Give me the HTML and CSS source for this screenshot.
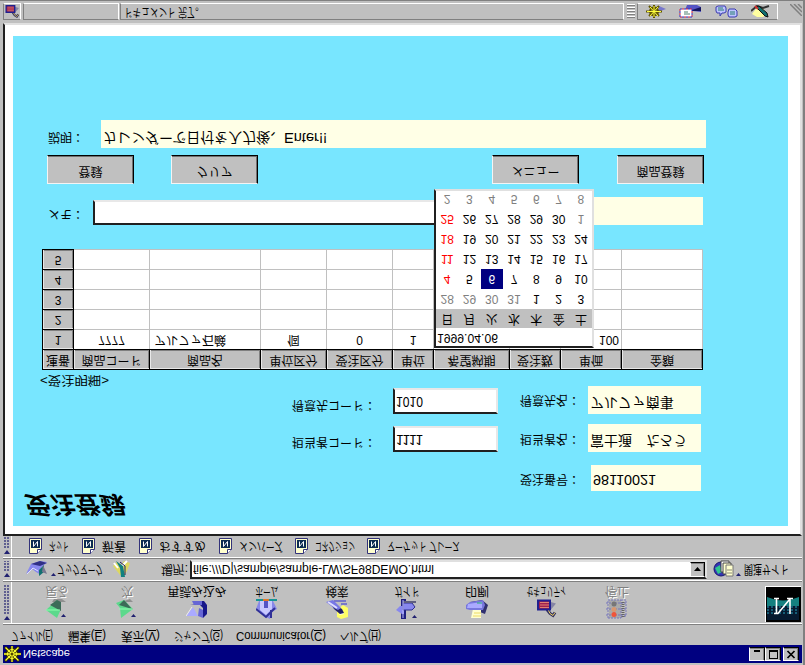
FILE: index.html
```html
<!DOCTYPE html>
<html lang="ja">
<head>
<meta charset="utf-8">
<title>Netscape</title>
<link rel="stylesheet" href="styles.css">
</head>
<body>
<svg class="defs" width="0" height="0">
  <symbol id="page" viewBox="0 0 13 16">
    <path d="M.5.5h8l4 4v11H.5z" fill="#ffffce" stroke="#33337a"/>
    <path d="M8.5.5v4h4" fill="#fff" stroke="#33337a"/>
    <path d="M2 6h9v8H2z" fill="#0c2c50"/>
    <path d="M4.500 12.500v-5l4 5v-5" fill="none" stroke="#fff"/>
  </symbol>
  <symbol id="wheel" viewBox="0 0 17 16">
    <path d="M8 0v16M0 8h17M1 1l14 14M15 1L1 15" stroke="#302c00" stroke-width="3"/>
    <circle cx="8" cy="8" r="5" fill="none" stroke="#302c00" stroke-width="3"/>
    <path d="M8 0v16M0 8h17M1.500 1.500l13 13M14.500 1.500l-13 13" stroke="#ffff30" stroke-width="1.300"/>
    <circle cx="8" cy="8" r="4.500" fill="none" stroke="#ffff30"/>
    <circle cx="8" cy="8" r="1.500" fill="#504800"/>
  </symbol>
  <symbol id="lock" viewBox="0 0 20 18">
    <path d="M12 16l7-2-5-6h-2z" fill="#8585a5"/>
    <path d="M10 8l3-4 3-2 2 3" fill="none" stroke="#303060" stroke-width="3"/>
    <path d="M11 8l2-4 3-2 2 3" fill="none" stroke="#eed060"/>
    <path d="M1 8h12v9H1z" fill="#a02050" stroke="#202090" stroke-width="2"/>
    <path d="M3 10h9M3 12.500h9M3 15h9" stroke="#e08070"/>
  </symbol>
</svg>

<div class="screen">
<header class="titlebar">
  <svg class="wheel" width="17" height="16"><use href="#wheel"/></svg>
  <span class="grow"><span data-w="47">Netscape</span></span>
  <span class="wbtn"><svg width="12" height="11"><path d="M3 8h6v2H3z"/></svg></span>
  <span class="wbtn"><svg width="12" height="11"><path d="M2 1h9v9H2zM3 2v6h7V2z" fill-rule="evenodd"/></svg></span>
  <span class="wbtn close"><svg width="12" height="11"><path d="M2.500 2l7 7M9.500 2l-7 7" stroke="#000" stroke-width="1.700"/></svg></span>
</header>
<nav class="menubar">
  <span class="m1"><span data-w="42">ファイル(<u>F</u>)</span></span>
  <span class="m2"><span data-w="38">編集(<u>E</u>)</span></span>
  <span class="m3"><span data-w="39">表示(<u>V</u>)</span></span>
  <span class="m4"><span data-w="49">ジャンプ(<u>G</u>)</span></span>
  <span class="m5"><span data-w="90">Communicator(<u>C</u>)</span></span>
  <span class="m6"><span data-w="41">ヘルプ(<u>H</u>)</span></span>
</nav>

<section class="bar navbar">
  <i class="grip"><b></b></i>
  <div class="tools">
    <div class="tool off">
      <svg width="22" height="21"><path d="M6 17h14l-4 3H8z" fill="#909090"/><path d="M0 9L11 1l4 9-4 9z" fill="#5cd98c"/><path d="M4 14l11-6v9l-4 2z" fill="#3b6b58"/><path d="M0 9h14" stroke="#8fffb0"/><path d="M15 2h5l-2.500 3z" fill="#202070"/></svg>
      <span data-w="23">戻る</span></div>
    <div class="tool off">
      <svg width="22" height="21"><path d="M5 17h12l-3 3z" fill="#909090"/><path d="M5 1l12 9-9 9-8-3 4-5z" fill="#5cd98c"/><path d="M3 14l13-4-8 9z" fill="#3b6b58"/><path d="M3 10h13" stroke="#8fffb0"/><path d="M15 2h5l-2.500 3z" fill="#202070"/></svg>
      <span data-w="12">次</span></div>
    <div class="tool">
      <svg width="22" height="21"><path d="M4 15h4l2 3h8l3-4v-9l-4-4v10l-3 3z" fill="#18188a"/><path d="M0 3h12l-5 9z" fill="#aaaaff"/><path d="M8 14h8v4H6z" fill="#6666d5"/><path d="M12 3l5-2v8l-4 2z" fill="#6666d5"/><path d="M0 3L6 12" stroke="#eee"/></svg>
      <span data-w="59">再読み込み</span></div>
    <div class="tool">
      <svg width="22" height="21"><path d="M0 10L10 2l4-2v6l7 4-4 8H3z" fill="#8888e8"/><path d="M4 9l6-5 6 6v9H4z" fill="#c9c9ff"/><path d="M0 10L10 2l9 9M15 1v8" fill="none" stroke="#303098" stroke-width="2"/><path d="M8 11h4v8H8z" fill="#5555c5"/><path d="M0 19h21" stroke="#159595" stroke-width="2"/><path d="M7 19h6" stroke="#e07828" stroke-width="2"/></svg>
      <span data-w="23">ホーム</span></div>
    <div class="tool">
      <svg width="22" height="21"><path d="M11 2l4-2 7 2v9l-5 3-6-5z" fill="#ffff65"/><path d="M13 4l5 1-2 3z" fill="#fff"/><path d="M3 18l13-8 2-4-4-1-6 5z" fill="#202068"/><path d="M0 17l8-6 4-2 3 2-8 8z" fill="#7777e5"/><path d="M2 17l9-6" stroke="#ddddff" stroke-width="2"/><path d="M8 18h12M15 15h6" stroke="#7777c9" stroke-width="2"/></svg>
      <span data-w="23">検索</span></div>
    <div class="tool">
      <svg width="22" height="21"><path d="M5 0h5v20H5z" fill="#202080"/><path d="M0 9l6-4h2v8H4z" fill="#8888ee"/><path d="M7 9h9l3 3-3 4H7z" fill="#8888ee" stroke="#303090"/><path d="M7 17h13" stroke="#606080" stroke-width="2"/><path d="M7 1v18" stroke="#bbbbff"/><path d="M16 1h5l-2.500 3z" fill="#202070"/></svg>
      <span data-w="25">ガイド</span></div>
    <div class="tool">
      <svg width="22" height="21"><path d="M4 17l12 2 6-5-3-9-10 4z" fill="#303070"/><path d="M5 1h10v9H7z" fill="#ffffd0"/><path d="M7 3h8M8 6h7" stroke="#eedb65"/><path d="M0 10l4-1h13l2 5-2 5-13-2-4-3z" fill="#7777dd"/><path d="M1 11h15v6L2 15z" fill="#aaaaff"/><path d="M11 16h5" stroke="#20b070"/></svg>
      <span data-w="24">印刷</span></div>
    <div class="tool">
      <svg width="20" height="18"><use href="#lock"/></svg>
      <span data-w="40">セキュリティ</span></div>
    <div class="tool off">
      <svg width="22" height="21"><path d="M3 1h12v18H3z" fill="#aaa"/><path d="M2 1h13v18H2zM15 2l5 1v16h-5M0 4h20M0 10h20M0 16h20" fill="none" stroke="#7777bb" stroke-dasharray="2 1"/><circle cx="8" cy="15" r="2.500" fill="#777"/><circle cx="8" cy="9.500" r="2.500" fill="#d99870"/><circle cx="8" cy="4.500" r="2.500" fill="#f0553a"/><path d="M17 2v16" stroke="#666" stroke-dasharray="1 1" stroke-width="3"/></svg>
      <span data-w="24">停止</span></div>
  </div>
  <svg class="logo" width="36" height="36">
    <path d="M0 0h36v36H0z" fill="#000"/><path d="M2 2h32v32H2z" fill="#061a30"/>
    <path d="M2 16h32v9H2z" fill="#148080"/><path d="M2 9h32M2 12h32M2 15h32" stroke="#155d76" stroke-dasharray="2 2" stroke-width="2"/>
    <path d="M2 25q16-7 32 0v9H2z" fill="#000"/>
    <path d="M9 23.500h5M11.500 23V8M9 8.500h4l11.500 14M25 23V8M22 23.500h6" fill="none" stroke="#fff" stroke-width="1.600"/>
    <path d="M0 35.500h36M.5 0v36" stroke="#fff"/>
  </svg>
</section>

<section class="bar locbar">
  <i class="grip"><b></b></i>
  <svg class="bm" width="30" height="18"><path d="M0 4l5 10 9 3 7-1-7-7 1-6-5 3-4 3z" fill="#8888ee"/><path d="M5 14l9 3 7-2-7-3z" fill="#303085"/><path d="M1 4l6 6 5-3" fill="none" stroke="#ddddff"/><path d="M13 2l5 4v7l-5-5z" fill="#107070"/><path d="M16 6l5-2-4 9" fill="#777790"/><path d="M25 2h5l-2.500 3z" fill="#202070"/></svg>
  <span data-w="46">ブックマーク</span>
  <svg class="loc" width="18" height="18"><path d="M0 12l4 4 4-3 3 4 6-2-3-8-3-5-4 1z" fill="#ddd860"/><path d="M5 10L1 15M9 12l5 5" stroke="#fff" stroke-width="2"/><path d="M8 1h4l-2 11-7 5 4-7z" fill="#108080"/><path d="M12 3v9l-5 4" fill="none" stroke="#202060"/></svg>
  <span data-w="27">場所:</span>
  <div class="url"><span class="grow"><span data-w="241">file:///D|/sample/sample-LW/SF98DEMO.html</span></span><span class="drop"><svg width="7" height="4"><path d="M0 0h7L3.500 4z"/></svg></span></div>
  <svg class="rel" width="28" height="18"><circle cx="8" cy="9" r="7" fill="#3535b5" stroke="#151570"/><path d="M2 10l3-6 4 2-2 7z" fill="#30c590"/><path d="M8 6h8v11H8z" fill="#fff" stroke="#444"/><path d="M10 4h8v11h-8z" fill="#ffffce" stroke="#444"/><path d="M13 2h7v11h-7z" fill="#ffffce" stroke="#777"/><path d="M14 5h5M14 8h5" stroke="#887"/><path d="M23 2h5l-2.500 3z" fill="#202070"/></svg>
  <span data-w="45">関連サイト</span>
</section>

<section class="bar personal">
  <i class="grip"><b></b></i>
  <a class="p1"><svg width="13" height="16"><use href="#page"/></svg><span data-w="20">ネット</span></a>
  <a class="p2"><svg width="13" height="16"><use href="#page"/></svg><span data-w="24">新着</span></a>
  <a class="p3"><svg width="13" height="16"><use href="#page"/></svg><span data-w="47">おすすめ</span></a>
  <a class="p4"><svg width="13" height="16"><use href="#page"/></svg><span data-w="44">メンバーズ</span></a>
  <a class="p5"><svg width="13" height="16"><use href="#page"/></svg><span data-w="40">コネクション</span></a>
  <a class="p6"><svg width="13" height="16"><use href="#page"/></svg><span data-w="73">マーケット プレース</span></a>
</section>

<main class="view">
<div class="form">
  <h1><span data-w="100">受注登録</span></h1>
  <div class="fields number">
    <label class="c3">受注番号：</label><output class="c4"><span data-w="63">98110021</span></output>
  </div>
  <div class="fields person">
    <label class="c1">担当者コード：</label><div class="inset c2"><span data-w="27">1111</span></div>
    <label class="c3">担当者名：</label><output class="c4">富士通　たろう</output>
  </div>
  <div class="fields client">
    <label class="c1">得意先コード：</label><div class="inset c2"><span data-w="27">1010</span></div>
    <label class="c3">得意先名：</label><output class="c4">アルファ商事</output>
  </div>
  <div class="caption"><span data-w="69">&lt;受注明細&gt;</span></div>
  <div class="order">
    <table>
      <colgroup><col class="w31"><col class="w76"><col class="w111"><col class="w66"><col class="w66"><col class="w41"><col class="w76"><col class="w51"><col class="w61"><col class="w81"></colgroup>
      <tr><th>連番</th><th>商品コード</th><th>商品名</th><th>単位区分</th><th>受注区分</th><th>単位</th><th>希望納期</th><th>受注数</th><th>単価</th><th>金額</th></tr>
      <tr><th>1</th><td>7777</td><td class="left">アルファ石鹸</td><td>個</td><td>0</td><td>1</td><td></td><td></td><td class="right">100</td><td></td></tr>
      <tr><th>2</th><td></td><td></td><td></td><td></td><td></td><td></td><td></td><td></td><td></td></tr>
      <tr><th>3</th><td></td><td></td><td></td><td></td><td></td><td></td><td></td><td></td><td></td></tr>
      <tr><th>4</th><td></td><td></td><td></td><td></td><td></td><td></td><td></td><td></td><td></td></tr>
      <tr><th>5</th><td></td><td></td><td></td><td></td><td></td><td></td><td></td><td></td><td></td></tr>
    </table>
    <div class="calendar">
      <div class="date"><span data-w="61">1999.04.06</span></div>
      <div class="week head"><span>日</span><span>月</span><span>火</span><span>水</span><span>木</span><span>金</span><span>土</span></div>
      <div class="week"><span class="dim">28</span><span class="dim">29</span><span class="dim">30</span><span class="dim">31</span><span>1</span><span>2</span><span>3</span></div>
      <div class="week"><span class="red">4</span><span>5</span><span class="sel">6</span><span>7</span><span>8</span><span>9</span><span>10</span></div>
      <div class="week"><span class="red">11</span><span>12</span><span>13</span><span>14</span><span>15</span><span>16</span><span>17</span></div>
      <div class="week"><span class="red">18</span><span>19</span><span>20</span><span>21</span><span>22</span><span>23</span><span>24</span></div>
      <div class="week"><span class="red">25</span><span>26</span><span>27</span><span>28</span><span>29</span><span>30</span><span class="dim">1</span></div>
      <div class="week"><span class="dim">2</span><span class="dim">3</span><span class="dim">4</span><span class="dim">5</span><span class="dim">6</span><span class="dim">7</span><span class="dim">8</span></div>
    </div>
  </div>
  <div class="memo"><label>メモ：</label><div class="inset"></div><output></output></div>
  <div class="buttons"><button>登録</button><button>クリア</button><button>メニュー</button><button>商品登録</button></div>
  <div class="desc"><label>説明：</label><output>カレンダーで日付を入力後、<span data-w="43">Enter!!</span></output></div>
</div>
</main>

<footer class="status">
  <div class="cell s1"><svg width="15" height="13" viewBox="0 0 20 18"><use href="#lock"/></svg></div>
  <div class="cell s2"></div>
  <div class="cell s3"><span data-w="80">ドキュメント 完了。</span></div>
  <i class="hgrip"></i>
  <div class="cell s4">
    <svg width="22" height="13" viewBox="0 0 22 13"><path d="M13 6l8 3-7 3z" fill="#7777cc"/><path d="M9 0v13M1 6.500h16M4 2l10 10M14 2L4 12" stroke="#605500" stroke-width="2"/><circle cx="9" cy="6.500" r="4" fill="none" stroke="#605500" stroke-width="2"/><path d="M9 1v11M2 6.500h14M5 2l8 9M13 2L5 11" stroke="#ffff40"/></svg>
    <svg width="24" height="13" viewBox="0 0 24 13"><path d="M6 8l16-2v5l-4 2H8z" fill="#5555c5"/><path d="M10 7h12v4z" fill="#151560"/><path d="M1 1h12v8H1z" fill="#fff" stroke="#d02040" stroke-dasharray="2 2"/><path d="M1 1h12v8H1z" fill="none" stroke="#3030c0" stroke-dasharray="2 2" stroke-dashoffset="2"/><path d="M5 4h6M5 6h4" stroke="#508070"/></svg>
    <svg width="24" height="13" viewBox="0 0 24 13"><path d="M3 12h7l1-2V6L9 5H7L5 2v3H2L1 7v4zM14 9h6l2-2V2l-2-1h-6l-1 2v3z" fill="#bfc4ff" stroke="#3a3ab0"/><path d="M3 8h6M3 10h5M15 4h5M15 6h5" stroke="#287f70"/></svg>
    <svg width="20" height="13" viewBox="0 0 20 13"><path d="M1 4l5-3h6l4 3-4 6-5 2z" fill="#ffffa0"/><path d="M0 7l6 5 6-2 6 2" fill="none" stroke="#333" stroke-width="2"/><path d="M5 11L14 2l3-1-1 4-8 7z" fill="#107070" stroke="#111"/><path d="M4 12l3-3" stroke="#d03030" stroke-width="2"/></svg>
  </div>
  <svg class="resize" width="12" height="12"><path d="M0 12L12 0M4 12l8-8M8 12l4-4" stroke="#808080" stroke-width="1.500"/></svg>
</footer>
</div>
<script src="fit.js"></script>
</body>
</html>
```
FILE: styles.css
```css
* { box-sizing: border-box; }
body { margin: 0; background: #c0c0c0; }
.defs { position: absolute; }
.screen {
  width: 805px; height: 665px; overflow: hidden;
  display: flex; flex-direction: column;
  padding: 2px 1px 0 3px; background: #c0c0c0;
  border-right: 2px solid #808080; border-bottom: 1px solid #808080;
  font: 12px/16px "Liberation Sans", "Noto Sans CJK JP", sans-serif;
  color: #000; white-space: nowrap;
  transform: scaleY(-1);
}
.screen svg { display: block; flex: none; }
[data-w] { display: inline-block; transform-origin: 0 50%; }
.grow { flex: 1; }

.titlebar { height: 18px; background: #000080; color: #fff; display: flex; align-items: center; font-size: 11px; padding-right: 3px; flex: none; }
.wheel { margin: 0 2px 0 1px; }
.wbtn { width: 16px; height: 14px; background: #c0c0c0; border: 1px solid; border-color: #fff #000 #000 #fff; box-shadow: inset -1px -1px #808080; }
.wbtn.close { margin-left: 2px; }
.wbtn svg { margin-left: 1px; }
.menubar { height: 20px; display: flex; align-items: center; padding: 0 0 2px 8px; flex: none; font-size: 12px; }
.m1 { width: 57px; } .m2 { width: 53px; } .m3 { width: 53px; } .m4 { width: 62px; } .m5 { width: 104px; }
.menubar u { text-underline-offset: 1px; }

.bar { display: flex; border-top: 1px solid #808080; box-shadow: inset 0 1px #fff; flex: none; padding-top: 1px; }
.grip { width: 9px; flex: none; border-right: 1px solid #fff; padding: 3px 1px 2px; display: flex; flex-direction: column; }
.grip::after { content: ""; flex: 1; background: radial-gradient(circle at 1px 1px, #606090 0.800px, transparent 1px) 0 0 / 3px 3px; }
.grip b { width: 0; height: 0; border: 3px solid transparent; border-top: 4px solid #202070; border-bottom: 0; margin-bottom: 2px; }

.navbar { height: 43px; }
.tools { display: flex; padding-left: 10px; flex: 1; }
.tool { width: 70px; display: flex; flex-direction: column; align-items: center; padding-top: 4px; }
.tool svg { height: 21px; }
.tool span { line-height: 15px; }
.off span { color: #808080; text-shadow: 1px -1px #fff; }
.logo { margin: 1px 1px 0 0; }

.locbar { height: 23px; align-items: center; }
.locbar .grip, .personal .grip { align-self: stretch; }
.bm { margin: 0 1px 0 14px; }
.loc { margin: 0 30px 0 10px; }
.url { width: 517px; height: 19px; margin-left: 2px; background: #fff; border: 2px solid; border-color: #202020 #e0e0e0 #e0e0e0 #202020; display: flex; align-items: center; padding-left: 1px; flex: none; }
.drop { width: 15px; height: 15px; background: #c0c0c0; border: 1px solid; border-color: #fff #000 #000 #fff; box-shadow: inset -1px -1px #808080; display: grid; place-items: center; }
.rel { margin: 0 3px 0 6px; }
.personal { height: 24px; align-items: center; }
.personal a { display: flex; align-items: center; gap: 7px; }
.p1 { width: 53px; margin-left: 17px; } .p2 { width: 57px; } .p3 { width: 80px; } .p4 { width: 76px; } .p5 { width: 72px; }

.view { flex: none; height: 513px; width: 799px; margin: -1px 0 0 0; padding: 8px 0 0 8px; background: #fff; border: 2px solid; border-color: #202020 #e0e0e0 #e0e0e0 #202020; }
.form { width: 775px; height: 490px; background: #78e6ff; display: flex; flex-direction: column; }
.form > * { flex: none; }
h1 { margin: 0; height: 35px; padding: 7px 0 0 10px; font: italic bold 24px/26px "Noto Sans CJK JP", sans-serif; }
output, .inset { display: block; font-size: 14px; }
output { background: #ffffe6; height: 28px; line-height: 22px; padding-left: 2px; }
.inset { background: #fff; border: 2px solid; border-color: #202020 #e8e8e8 #e8e8e8 #202020; }
.fields { display: grid; grid-template-columns: 101px 127px 68px 113px; padding-left: 279px; height: 28px; }
.c1 { grid-column: 1; } .c2 { grid-column: 2; width: 105px; height: 26px; padding-left: 1px; line-height: 21px; } .c3 { grid-column: 3; } .c4 { grid-column: 4; }
.number { height: 26px; }
.number .c3 { padding-top: 4px; }
.number output { height: 26px; margin-left: 3px; }
.person { margin-top: 13px; }
.person .c1 { padding-top: 2px; } .person .c3 { padding-top: 5px; }
.client { margin-top: 10px; }
.client .c1 { padding-top: 1px; } .client .c3 { padding-top: 6px; }
.caption { height: 16px; padding-left: 27px; line-height: 12px; }

.order { position: relative; height: 145px; padding-left: 29px; }
table { width: 660px; table-layout: fixed; border-collapse: collapse; }
.w31 { width: 31px; } .w76 { width: 76px; } .w111 { width: 111px; } .w66 { width: 66px; } .w41 { width: 41px; } .w51 { width: 51px; } .w61 { width: 61px; } .w81 { width: 81px; }
tr { height: 20px; }
td, th { height: 20px; padding: 0; text-align: center; line-height: 17px; border: 1px solid #c0c0c0; background: #fff; font-weight: normal; }
th { background: #c0c0c0; border-color: #000; box-shadow: inset 1px 1px #e8e8e8, inset -1px -1px #808080; }
.left { text-align: left; padding-left: 4px; }
.right { text-align: right; padding-right: 2px; }
.calendar { position: absolute; left: 421px; top: 22px; width: 160px; height: 159px; background: #fff; border: 2px solid; border-color: #202020 #e0e0e0 #e0e0e0 #202020; z-index: 2; }
.date { height: 18px; line-height: 17px; padding-left: 1px; font-size: 12px; }
.week { display: grid; grid-template-columns: repeat(7, 22.300px); height: 20px; line-height: 20px; text-align: center; font-size: 12px; }
.head { background: #c0c0c0; height: 19px; line-height: 19px; }
.dim { color: #808080; }
.red { color: #f00; }
.sel { background: #000080; color: #fff; }

.memo { display: flex; padding-left: 35px; height: 41px; }
.memo label { width: 45px; padding-top: 3px; }
.memo .inset { width: 345px; height: 25px; }
.memo output { width: 265px; }
.buttons { display: flex; padding-left: 34px; height: 36px; }
button { width: 87px; height: 29px; padding: 0 0 3px; border: 1px solid; border-color: #f4f4f4 #000 #000 #f4f4f4; box-shadow: inset -1px -1px #707070; background: #c0c0c0; font: inherit; color: #000; }
button + button { margin-left: 37px; }
button:nth-child(3) { margin-left: 234px; }
button:nth-child(4) { margin-left: 38px; }
.desc { display: flex; padding-left: 35px; }
.desc label { width: 53px; padding-top: 3px; }
.desc output { width: 605px; line-height: 20px; }

.status { display: flex; height: 17px; margin-top: 3px; flex: none; }
.cell { border: 1px solid; border-color: #808080 #fff #fff #808080; overflow: hidden; }
.s1 { width: 18px; padding: 1px; margin-right: 2px; }
.s2 { width: 96px; margin-right: 1px; }
.s3 { width: 504px; padding-left: 3px; line-height: 15px; }
.hgrip { width: 8px; margin: 2px 2px 1px 3px; background: repeating-linear-gradient(#808080 0 1px, #fff 1px 2px, #c0c0c0 2px 3px); }
.s4 { width: 141px; display: flex; gap: 12px; padding: 1px 0 0 7px; }
.resize { margin: 4px 0 0 12px; }
```
FILE: fit.js
```js
// Condense or widen each label to its designed width.
document.querySelectorAll('[data-w]').forEach(function (el) {
  var target = Number(el.dataset.w);
  var natural = el.getBoundingClientRect().width;
  el.style.transform = 'scaleX(' + target / natural + ')';
  if (el.parentElement.classList.contains('tool')) return;
  el.style.marginRight = (target - natural) + 'px';
});
// Toolbar captions stay centred under their icons.
document.querySelectorAll('.tool [data-w]').forEach(function (el) {
  el.style.transformOrigin = '50% 50%';
});
```
